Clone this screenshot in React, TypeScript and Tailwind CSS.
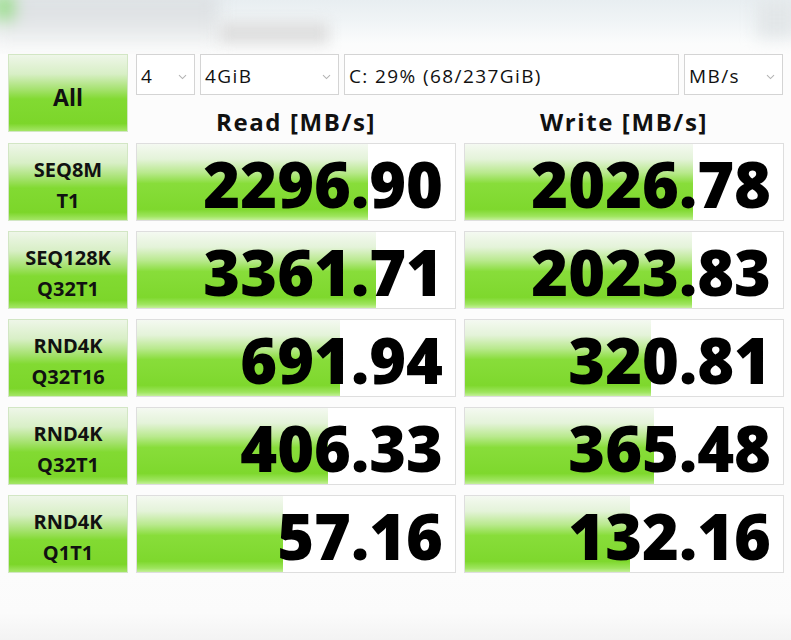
import React from "react";

const rows = [
  { l1: "SEQ8M", l2: "T1", r: "2296.90", rw: 72.5, w: "2026.78", ww: 71.6 },
  { l1: "SEQ128K", l2: "Q32T1", r: "3361.71", rw: 75.3, w: "2023.83", ww: 71.3 },
  { l1: "RND4K", l2: "Q32T16", r: "691.94", rw: 63.75, w: "320.81", ww: 58.4 },
  { l1: "RND4K", l2: "Q32T1", r: "406.33", rw: 60, w: "365.48", ww: 59.4 },
  { l1: "RND4K", l2: "Q1T1", r: "57.16", rw: 46, w: "132.16", ww: 51.9 },
];

function Chevron() {
  return (
    <svg width="9" height="6" viewBox="0 0 9 6" className="shrink-0">
      <path d="M1 1.2 L4.5 4.6 L8 1.2" fill="none" stroke="#b4b4b4" strokeWidth="1.1" />
    </svg>
  );
}

function Combo({ text, width, chevron = true }: { text: string; width: string; chevron?: boolean }) {
  return (
    <div
      className={`${width} h-[41px] border border-[#d4d4d4] bg-white flex items-center justify-between pl-[4px] pr-[7px] pt-[4px] text-[19px] tracking-[1.4px] text-[#111]`}
    >
      <span>{text}</span>
      {chevron ? <Chevron /> : null}
    </div>
  );
}

function ValueBox({ value, pct }: { value: string; pct: number }) {
  return (
    <div className="h-[78px] border border-[#dedede] bg-white grid">
      <div
        className="col-start-1 row-start-1 h-full bg-[linear-gradient(to_bottom,#f4f9f1_0%,#e4f3d9_20%,#b8e98c_38%,#88dd3a_52%,#7ed82d_86%,#9ee55e_95%,#c4f09a_100%)]"
        style={{ width: `${pct}%` }}
      />
      <div className="col-start-1 row-start-1 flex items-center justify-end pr-[12px] pt-[2px] text-[63px] font-extrabold leading-none text-black">
        {value}
      </div>
    </div>
  );
}

const labelBg =
  "border border-[#d2e6c4] bg-[linear-gradient(to_bottom,#eef6e8_0%,#d8efc6_25%,#a6e270_45%,#82da32_58%,#7cd62a_90%,#a4e666_100%)]";

export default function App() {
  return (
    <div className="w-[791px] h-[640px] overflow-hidden bg-[#fcfcfc] font-['Open_Sans',sans-serif] text-black flex flex-col">
      {/* blurred title area */}
      <div className="h-[54px] flex overflow-hidden bg-[linear-gradient(to_bottom,#e8eef1_0%,#f0f4f6_40%,#fbfcfc_80%,#fcfcfc_100%)]">
        <div className="w-[225px] h-[52px] -mt-[6px] -ml-[6px] flex blur-[8px] bg-[linear-gradient(to_bottom,#dadee1_0%,#e2e5e7_55%,#f4f5f5_100%)]">
          <div className="w-[20px] h-[26px] bg-[#9adc8c]" />
        </div>
        <div className="w-[110px] h-[22px] mt-[22px] blur-[7px] bg-[#dedede]" />
        <div className="flex-1" />
        <div className="w-[40px] h-[38px] -mr-[6px] blur-[8px] bg-[#e2e6e8]" />
      </div>

      {/* controls + headers */}
      <div className="pl-[8px] flex gap-[8px]">
        <div className={`w-[120px] h-[78px] ${labelBg} flex items-center justify-center pt-[8px] text-[23px] font-bold text-[#111]`}>
          All
        </div>
        <div className="w-[648px] flex flex-col">
          <div className="h-[41px] flex gap-[5px]">
            <Combo text="4" width="w-[59px]" />
            <Combo text="4GiB" width="w-[139px]" />
            <Combo text="C: 29% (68/237GiB)" width="w-[335px]" chevron={false} />
            <Combo text="MB/s" width="w-[99px]" />
          </div>
          <div className="h-[48px] grid grid-cols-[320px_320px] gap-[8px]">
            <div className="flex items-center justify-center pt-[5px] text-[24px] font-bold tracking-[1.6px] text-[#111]">
              Read [MB/s]
            </div>
            <div className="flex items-center justify-center pt-[5px] text-[24px] font-bold tracking-[1.6px] text-[#111]">
              Write [MB/s]
            </div>
          </div>
        </div>
      </div>

      {/* result rows */}
      <div className="pl-[8px] flex flex-col gap-[10px]">
        {rows.map((row, i) => (
          <div key={i} className="grid grid-cols-[120px_320px_320px] gap-[8px]">
            <div className={`h-[78px] ${labelBg} flex flex-col items-center justify-center pt-[5px] text-[20px] font-bold leading-[31px] text-[#111]`}>
              <span>{row.l1}</span>
              <span>{row.l2}</span>
            </div>
            <ValueBox value={row.r} pct={row.rw} />
            <ValueBox value={row.w} pct={row.ww} />
          </div>
        ))}
      </div>

      <div className="flex-1 bg-[linear-gradient(to_bottom,#fcfcfc_0%,#fbfbfb_60%,#f3f3f3_100%)]" />
    </div>
  );
}
